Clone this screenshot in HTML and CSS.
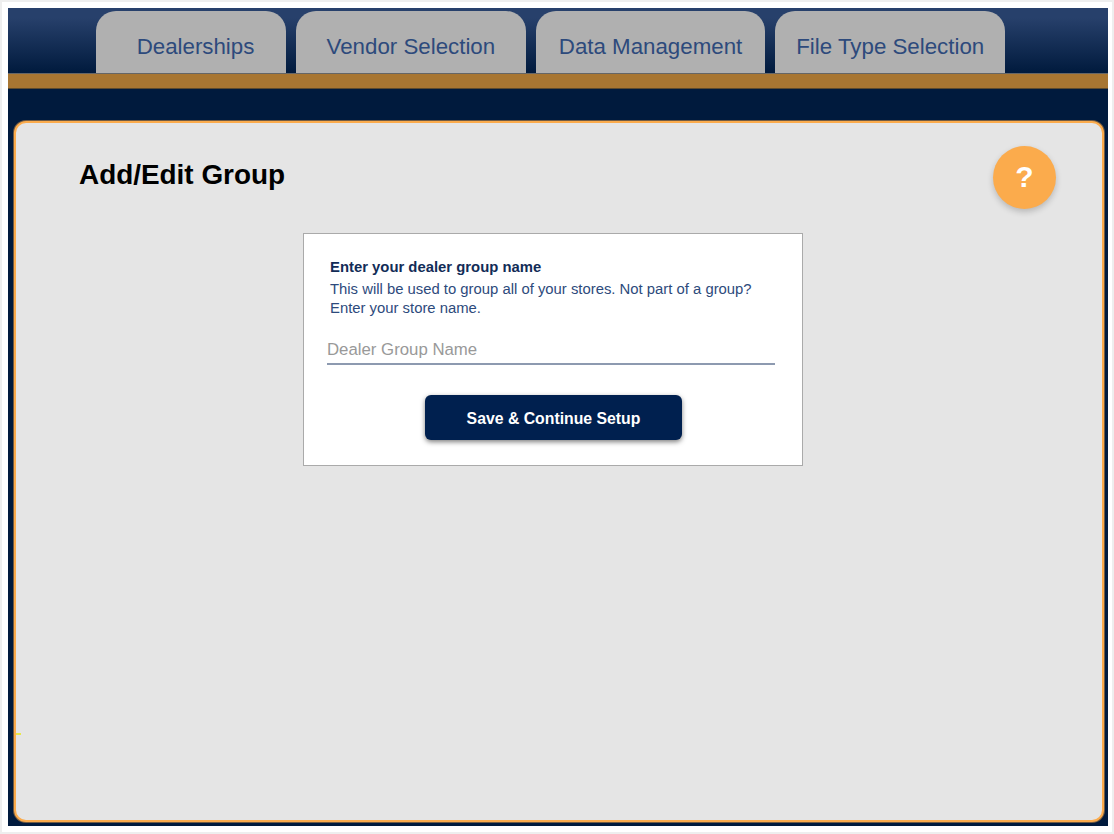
FILE: index.html
```html
<!DOCTYPE html>
<html lang="en">
<head>
    <meta charset="UTF-8">
    <meta name="viewport" content="width=device-width, initial-scale=1.0">
    <title>Add/Edit Group</title>
    <link rel="stylesheet" href="styles.css">
</head>
<body>
    <div class="app">
        <header>
            <nav class="tabs">
                <a href="#" class="tab tab-first">Dealerships</a>
                <a href="#" class="tab">Vendor Selection</a>
                <a href="#" class="tab">Data Management</a>
                <a href="#" class="tab">File Type Selection</a>
            </nav>
        </header>
        <div class="accent-bar"></div>
        <main>
            <div class="card">
                <span class="tick"></span>
                <a href="#" class="help-btn">?</a>
                <h1>Add/Edit Group</h1>
                <form class="group-form">
                    <h2>Enter your dealer group name</h2>
                    <p>This will be used to group all of your stores. Not part of a group? Enter your store name.</p>
                    <input type="text" class="name-input" placeholder="Dealer Group Name">
                    <button type="button" class="save-btn">Save &amp; Continue Setup</button>
                </form>
            </div>
        </main>
    </div>
</body>
</html>
```

FILE: styles.css
```css
html {
    height: 100%;
    box-shadow: inset 0 0 0 2px #eeeeee;
}
body {
    margin: 0;
    padding: 8px 6px 8px 8px;
    height: 100%;
    box-sizing: border-box;
    font-family: "Liberation Sans", Arial, sans-serif;
}
.app {
    display: flex;
    flex-direction: column;
    height: 100%;
    background-color: #001a3d;
}
header {
    height: 66px;
    padding: 3px 0 0 88px;
    box-sizing: border-box;
    background-image: linear-gradient(to bottom, #27406b, #27406b 15%, #001a3d);
    border-bottom: 1px solid #666666;
}
.tabs {
    display: flex;
    gap: 10px;
    height: 100%;
}
.tab {
    width: 229.7px;
    display: flex;
    justify-content: center;
    align-items: center;
    padding-top: 9px;
    box-sizing: border-box;
    background-color: #b0b0b0;
    border-radius: 20px 20px 0 0;
    color: #2d4a7c;
    font-size: 22.3px;
    text-decoration: none;
}
.tab-first {
    width: 190px;
    padding-left: 9px;
}
.accent-bar {
    height: 14px;
    background-color: #a87632;
    border-bottom: 1px solid #5c4a2e;
}
main {
    flex-grow: 1;
    display: flex;
    padding: 32px 4px 4px 6px;
}
.card {
    position: relative;
    flex-grow: 1;
    padding: 36px 0 0 63px;
    background-color: #e5e5e5;
    border: 2px solid #fbab4c;
    border-radius: 12px;
    box-shadow: 0 0 0 1px rgba(251, 171, 76, 0.45);
}
.tick {
    position: absolute;
    left: 0;
    top: 610px;
    width: 5px;
    height: 2px;
    background-color: #e8e84a;
}
.help-btn {
    position: absolute;
    top: 23px;
    right: 46px;
    width: 63px;
    height: 63px;
    display: flex;
    justify-content: center;
    align-items: center;
    padding-bottom: 1px;
    box-sizing: border-box;
    background-color: #fbab4c;
    border-radius: 50%;
    box-shadow: 0 3px 6px rgba(0, 0, 0, 0.2);
    color: white;
    font-size: 30px;
    font-weight: bold;
    text-decoration: none;
}
h1 {
    margin: 0;
    font-size: 27.9px;
    line-height: 32px;
    color: black;
}
.group-form {
    width: 500px;
    height: 233px;
    margin: 42px 0 0 224px;
    padding: 25px 27px 0 23px;
    box-sizing: border-box;
    display: flex;
    flex-direction: column;
    background-color: white;
    border: 1px solid #aaaaaa;
}
h2 {
    margin: 0 0 4px 3px;
    font-size: 14.85px;
    line-height: 17px;
    color: #122c57;
}
.group-form p {
    margin: 0 0 0 3px;
    font-size: 14.85px;
    line-height: 19px;
    color: #2d4a7c;
}
.name-input {
    height: 30px;
    margin-top: 17px;
    padding: 2px 0 0;
    box-sizing: border-box;
    border: none;
    border-bottom: 2px solid #8d9ab0;
    outline: none;
    font-family: inherit;
    font-size: 16.8px;
}
.name-input::placeholder {
    color: #999999;
}
.save-btn {
    width: 257px;
    height: 45px;
    margin: 30px 0 0 98px;
    padding: 2px 0 0;
    background-color: #00204f;
    border: none;
    border-radius: 6px;
    box-shadow: 0 2px 5px rgba(0, 0, 0, 0.5);
    color: white;
    font-family: inherit;
    font-size: 15.8px;
    font-weight: bold;
    cursor: pointer;
}
```
